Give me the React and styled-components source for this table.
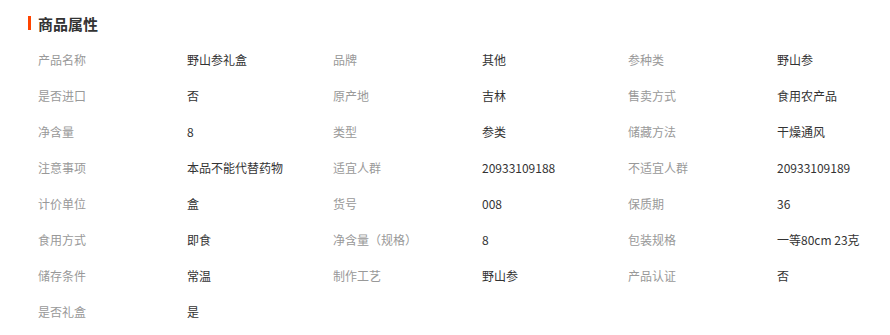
import React from 'react';
import styled, { createGlobalStyle } from 'styled-components';

const GlobalStyle = createGlobalStyle`
  body {
    margin: 0;
    background: #fff;
    font-family: "Microsoft YaHei", "Noto Sans CJK SC", "Noto Sans", sans-serif;
  }
`;

const Wrapper = styled.div`
  width: 890px;
  padding: 12px 0 0 28px;
  box-sizing: border-box;
`;

const Title = styled.h3`
  margin: 0;
  display: flex;
  align-items: center;
  gap: 7px;
  height: 22px;
  font-size: 15px;
  font-weight: bold;
  color: #333;

  &::before {
    content: '';
    width: 3px;
    height: 14px;
    background: #ff4400;
  }
`;

const Grid = styled.div`
  display: grid;
  grid-template-columns: repeat(3, 149px 146px);
  padding-left: 10px;
  margin-top: 8px;
`;

const Cell = styled.div`
  height: 36px;
  line-height: 36px;
  font-size: 12px;
  white-space: nowrap;
  color: ${({ $label }) => ($label ? '#999' : '#333')};
`;

const attrs = [
  ['产品名称', '野山参礼盒'],
  ['品牌', '其他'],
  ['参种类', '野山参'],
  ['是否进口', '否'],
  ['原产地', '吉林'],
  ['售卖方式', '食用农产品'],
  ['净含量', '8'],
  ['类型', '参类'],
  ['储藏方法', '干燥通风'],
  ['注意事项', '本品不能代替药物'],
  ['适宜人群', '20933109188'],
  ['不适宜人群', '20933109189'],
  ['计价单位', '盒'],
  ['货号', '008'],
  ['保质期', '36'],
  ['食用方式', '即食'],
  ['净含量（规格）', '8'],
  ['包装规格', '一等80cm 23克'],
  ['储存条件', '常温'],
  ['制作工艺', '野山参'],
  ['产品认证', '否'],
  ['是否礼盒', '是'],
];

export default function App() {
  return (
    <>
      <GlobalStyle />
      <Wrapper>
        <Title>商品属性</Title>
        <Grid>
          {attrs.map(([k, v]) => (
            <React.Fragment key={k}>
              <Cell $label>{k}</Cell>
              <Cell>{v}</Cell>
            </React.Fragment>
          ))}
        </Grid>
      </Wrapper>
    </>
  );
}
